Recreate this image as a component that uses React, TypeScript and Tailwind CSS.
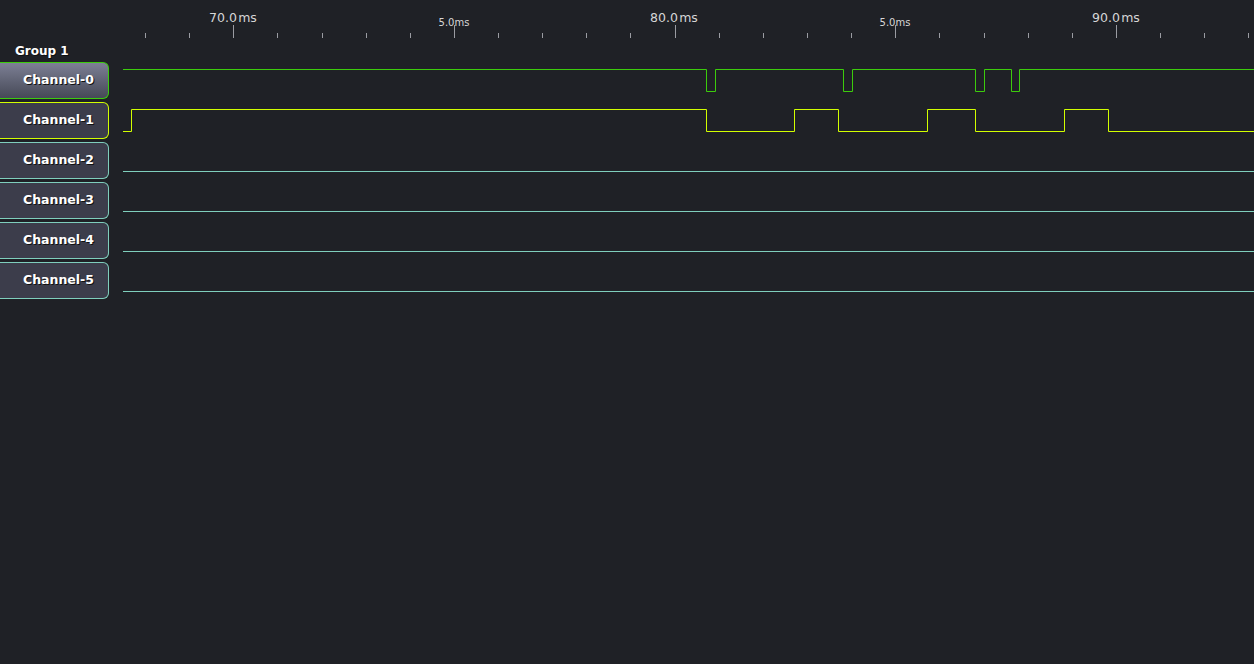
const GREEN = "#3ccc0c";
const YELLOW = "#d2ff00";
const TEAL = "#7fcfbd";

// edges in page x; level starts at `start` (1 = high)
type Trace = { name: string; color: string; start: 0 | 1; edges: number[]; selected?: boolean };

const TRACES: Trace[] = [
  { name: "Channel-0", color: GREEN, start: 1, edges: [706, 715, 843, 852, 975, 984, 1011, 1019], selected: true },
  { name: "Channel-1", color: YELLOW, start: 0, edges: [131, 706, 794, 838, 927, 975, 1064, 1108] },
  { name: "Channel-2", color: TEAL, start: 0, edges: [] },
  { name: "Channel-3", color: TEAL, start: 0, edges: [] },
  { name: "Channel-4", color: TEAL, start: 0, edges: [] },
  { name: "Channel-5", color: TEAL, start: 0, edges: [] },
];

const X0 = 123;
const W = 1254 - X0;
const HI = 9.5;
const LO = 31.5;

function tracePoints(t: Trace): string {
  let level = t.start;
  const y = () => (level ? HI : LO);
  const pts: string[] = [`0,${y()}`];
  for (const e of t.edges) {
    const x = e - X0 + 0.5;
    pts.push(`${x},${y()}`);
    level = level ? 0 : 1;
    pts.push(`${x},${y()}`);
  }
  pts.push(`${W},${y()}`);
  return pts.join(" ");
}

const MINOR = Array.from({ length: 26 }, (_, i) => i - 2);

function Ruler() {
  return (
    <div className="relative h-10 w-full">
      {MINOR.map((n) => {
        const x = Math.round(233.3 + 44.13 * n);
        const major = n % 5 === 0;
        return (
          <div
            key={n}
            className={`absolute w-px bg-[#9a9ca2] ${major ? "top-[25px] h-[13px]" : "top-[33px] h-[5px]"}`}
            style={{ left: x }}
          />
        );
      })}
      {[
        { x: 233, t: "70.0\u200Ams", big: true },
        { x: 454, t: "5.0ms", big: false },
        { x: 674, t: "80.0\u200Ams", big: true },
        { x: 895, t: "5.0ms", big: false },
        { x: 1116, t: "90.0\u200Ams", big: true },
      ].map((l) => (
        <span
          key={l.x}
          className={`absolute -translate-x-1/2 whitespace-nowrap text-[#d6d6d6] ${
            l.big ? "top-[10px] text-[12.5px] leading-[16px]" : "top-[16px] text-[10px] leading-[13px]"
          }`}
          style={{ left: l.x }}
        >
          {l.t}
        </span>
      ))}
    </div>
  );
}

function ChannelRow({ t }: { t: Trace }) {
  return (
    <div className="flex h-10 items-start">
      <div
        className={[
          "mt-[2px] flex h-[37px] w-[109px] shrink-0 items-center justify-end rounded-r-[6px] border border-l-0 pr-[14px] pb-[1px]",
          t.selected ? "bg-gradient-to-b from-[#7d8095] to-[#464957]" : "bg-[#3c3d4b]",
        ].join(" ")}
        style={{ borderColor: t.color }}
      >
        <span className="text-[12.5px] font-bold text-white [text-shadow:1px_1px_0_#111]">{t.name}</span>
      </div>
      <svg className="ml-[14px] shrink-0" width={W} height={40} viewBox={`0 0 ${W} 40`}>
        <polyline points={tracePoints(t)} fill="none" stroke={t.color} strokeWidth={1} />
      </svg>
    </div>
  );
}

export default function App() {
  return (
    <div className="h-[664px] w-[1254px] overflow-hidden bg-[#1f2126] font-['DejaVu_Sans',sans-serif]">
      <Ruler />
      <div className="flex h-5 items-center pl-[15px] pt-[2px] text-[12px] font-bold text-white [text-shadow:1px_1px_0_#111]">
        Group 1
      </div>
      {TRACES.map((t) => (
        <ChannelRow key={t.name} t={t} />
      ))}
    </div>
  );
}
